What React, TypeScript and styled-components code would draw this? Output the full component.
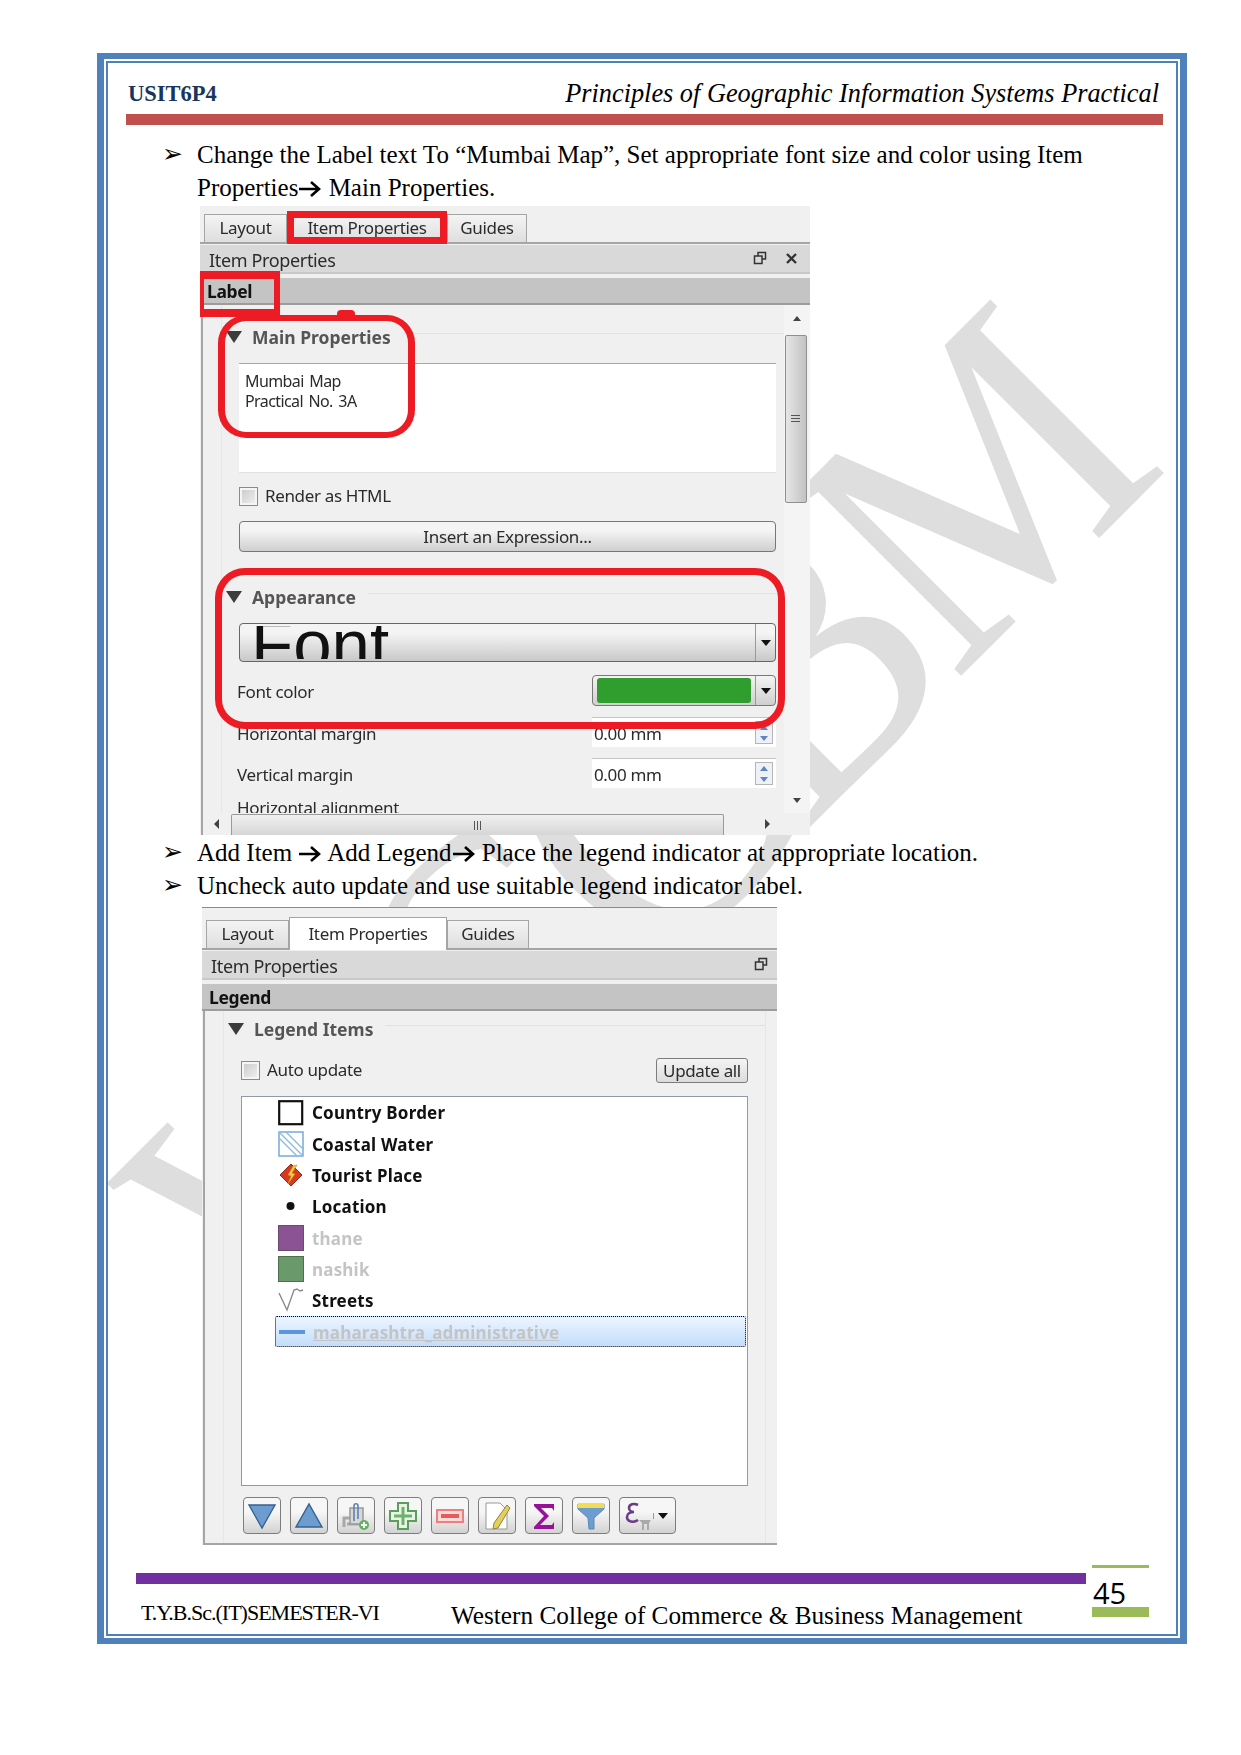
import * as React from 'react';
import styled, {createGlobalStyle} from 'styled-components';

const GlobalStyle = createGlobalStyle`
  html, body {
    margin: 0;
    padding: 0;
    background: #fff;
  }
`;

const Page = styled.div`
  position: relative;
  width: 1241px;
  height: 1755px;
  padding: 53px 0 0 97px;
  box-sizing: border-box;
  overflow: hidden;
  background: #fff;
  font-family: 'Liberation Serif', serif;
  color: #000;
`;

const Watermark = styled.div`
  position: absolute;
  left: 58px;
  top: 1135px;
  transform-origin: 0 0;
  transform: rotate(-45deg) scaleX(0.92);
  font: 375px/1 'Liberation Serif', serif;
  white-space: nowrap;
  color: #dedede;
  letter-spacing: -17px;
`;

const OuterFrame = styled.div`
  position: relative;
  width: 1090px;
  height: 1591px;
  box-sizing: border-box;
  border: solid #4f81bd;
  border-width: 6px 7px;
  padding: 2px;
`;

const InnerFrame = styled.div`
  height: 100%;
  box-sizing: border-box;
  border: 2px solid #4f81bd;
`;

const Header = styled.div`
  display: flex;
  justify-content: space-between;
  align-items: center;
  height: 51px;
  padding: 11px 17px 0 20px;
  box-sizing: border-box;
`;

const Code = styled.div`
  font-size: 22.5px;
  font-weight: 700;
  color: #17365d;
`;

const HeaderTitle = styled.div`
  font-size: 26.3px;
  font-style: italic;
`;

const RedRule = styled.div`
  height: 11px;
  width: 1037px;
  margin-left: 18px;
  background: #c0504d;
`;

const Bullets = styled.div<{$top: number}>`
  margin: ${p => p.$top}px 0 0 54px;
  font-size: 25px;
  line-height: 33px;
`;

const Bullet = styled.div`
  display: flex;
`;

const Mark = styled.span`
  width: 35px;
  flex: none;
  font: 25px/31px 'DejaVu Sans', sans-serif;
`;

const ArrowSvg = styled.svg`
  width: 22px;
  height: 16px;
  vertical-align: -1px;
  margin: 0 1px;
`;

const Arrow = () => (
  <ArrowSvg viewBox="0 0 22 16" fill="none" stroke="#000" strokeWidth="2.6">
    <path d="M0 8h20M12 1l8 7-8 7" />
  </ArrowSvg>
);

const Shot = styled.div<{$left: number; $width: number; $height: number; $top: number}>`
  position: relative;
  margin: ${p => p.$top}px 0 0 ${p => p.$left}px;
  width: ${p => p.$width}px;
  height: ${p => p.$height}px;
  overflow: hidden;
  background: #f0f0f0;
  font: 17px/1.2 'Noto Sans', sans-serif;
  letter-spacing: -0.35px;
  color: #2b2b2b;
  filter: blur(0.45px);
`;

const TabRow = styled.div<{$height: number; $rule?: boolean}>`
  display: flex;
  align-items: flex-end;
  height: ${p => p.$height}px;
  padding-left: 4px;
  border-top: ${p => (p.$rule ? '1px solid #8a8a8a' : 'none')};
  border-bottom: 2px solid #a5a5a5;
`;

const Tab = styled.div<{$width: number; $active?: boolean}>`
  display: flex;
  align-items: center;
  justify-content: center;
  width: ${p => p.$width}px;
  height: ${p => (p.$active ? 33 : 28)}px;
  margin-bottom: ${p => (p.$active ? -2 : 0)}px;
  box-sizing: border-box;
  border: 1px solid #a5a5a5;
  border-bottom: none;
  background: ${p => (p.$active ? '#fff' : 'linear-gradient(#f4f4f4, #dedede)')};
  position: relative;
`;

const DockTitle = styled.div`
  display: flex;
  align-items: center;
  justify-content: space-between;
  height: 29px;
  margin-top: 1px;
  padding: 4px 9px 0;
  box-sizing: border-box;
  background: #d9d9d9;
  border-bottom: 2px solid #c8c8c8;
  font-size: 18px;
`;

const DockIcons = styled.div`
  display: flex;
  gap: 18px;
  align-items: center;
  margin-top: -5px;
`;

const ItemBar = styled.div`
  height: 27px;
  margin-top: 4px;
  padding-left: 7px;
  box-sizing: border-box;
  background: #c4c4c4;
  border-bottom: 2px solid #9c9c9c;
  font-weight: 700;
  font-size: 17.5px;
  color: #111;
  line-height: 27px;
`;

const ScrollBody = styled.div`
  display: flex;
  height: 508px;
`;

const ScrollContent = styled.div`
  width: 583px;
  margin-left: 1px;
  overflow: hidden;
  box-sizing: border-box;
  border-left: 2px solid #a5a5a5;
  padding-left: 18px;
`;

const GroupRail = styled.div`
  height: 100%;
  padding: 17px 0 0 17px;
  box-sizing: border-box;
  border-left: 1px solid #e3e6ea;
`;

const VScroll = styled.div`
  position: relative;
  display: flex;
  flex-direction: column;
  align-items: center;
  width: 26px;
  padding-right: 3px;
  box-sizing: border-box;
  background: #f4f4f4;
`;

const ScrollThumb = styled.div`
  display: flex;
  align-items: center;
  justify-content: center;
  width: 22px;
  height: 168px;
  margin-top: 30px;
  box-sizing: border-box;
  border: 1px solid #8f8f8f;
  border-radius: 2px;
  background: linear-gradient(90deg, #e6e6e6, #c2c2c2);
`;

const Grip = styled.div<{$wide?: boolean}>`
  width: ${p => (p.$wide ? 7 : 9)}px;
  height: ${p => (p.$wide ? 9 : 8)}px;
  background: ${p =>
    p.$wide
      ? 'repeating-linear-gradient(90deg, #555 0 1px, transparent 1px 3px)'
      : 'repeating-linear-gradient(#555 0 1px, transparent 1px 3px)'};
`;

const TriUp = styled.div`
  position: absolute;
  top: 11px;
  left: 9px;
  border: 4px solid transparent;
  border-top: none;
  border-bottom: 5px solid #444;
`;

const TriDown = styled.div`
  position: absolute;
  bottom: 10px;
  left: 9px;
  border: 4px solid transparent;
  border-bottom: none;
  border-top: 5px solid #444;
`;

const HScroll = styled.div`
  display: flex;
  align-items: flex-end;
  height: 22px;
  margin-left: 1px;
  box-sizing: border-box;
  border-left: 2px solid #a5a5a5;
`;

const HArrow = styled.div<{$width: number; $dir: 'l' | 'r'}>`
  display: flex;
  align-items: center;
  justify-content: center;
  width: ${p => p.$width}px;
  height: 100%;
  &::after {
    content: '';
    border: 5px solid transparent;
    border-${p => (p.$dir === 'l' ? 'left' : 'right')}: none;
    border-${p => (p.$dir === 'l' ? 'right' : 'left')}: 5px solid #444;
  }
`;

const HThumb = styled.div`
  display: flex;
  align-items: center;
  justify-content: center;
  width: 494px;
  height: 21px;
  box-sizing: border-box;
  border: 1px solid #9a9a9a;
  border-bottom: none;
  border-radius: 2px 2px 0 0;
  background: linear-gradient(#f0f0f0, #d6d6d6);
`;

const GroupTitle = styled.div<{$height: number; $top?: number}>`
  display: flex;
  align-items: center;
  height: ${p => p.$height}px;
  margin: ${p => p.$top ?? 0}px 0 0 -13px;
  font-weight: 700;
  font-size: 17.5px;
  color: #555;
  letter-spacing: 0;
`;

const Triangle = styled.span`
  width: 0;
  height: 0;
  margin-right: 10px;
  border: 8px solid transparent;
  border-bottom: none;
  border-top: 12px solid #3c3c3c;
`;

const TitleRule = styled.span`
  flex: 1;
  height: 1px;
  margin: -8px 0 0 12px;
  background: #dfe3e8;
`;

const TextBox = styled.div`
  width: 537px;
  height: 110px;
  margin-top: 11px;
  padding: 7px 6px;
  box-sizing: border-box;
  background: #fff;
  border-top: 1px solid #a8a8a8;
  border-bottom: 1px solid #e2e2e2;
  line-height: 20px;
  font-size: 16px;
  letter-spacing: -0.6px;
  word-spacing: 2px;
`;

const CheckRow = styled.div<{$top: number}>`
  display: flex;
  align-items: center;
  gap: 7px;
  margin-top: ${p => p.$top}px;
`;

const CheckBox = styled.span`
  width: 19px;
  height: 19px;
  box-sizing: border-box;
  border: 1px solid #8a8a8a;
  outline: 2px solid #f5f5f5;
  outline-offset: -3px;
  background: linear-gradient(135deg, #c8c8c8, #f2f2f2);
`;

const WideButton = styled.div`
  width: 537px;
  height: 31px;
  margin-top: 15px;
  box-sizing: border-box;
  border: 1px solid #777;
  border-radius: 4px;
  background: linear-gradient(#f4f4f4 30%, #cfcfcf);
  text-align: center;
  line-height: 29px;
`;

const FontButton = styled.div`
  display: flex;
  width: 537px;
  height: 39px;
  margin-top: 11px;
  box-sizing: border-box;
  border: 1px solid #666;
  border-radius: 4px;
  background: linear-gradient(#f4f4f4 25%, #c8c8c8);
`;

const FontPreview = styled.div`
  flex: 1;
  overflow: hidden;
  margin: 2px 0 3px;
  padding-left: 11px;
  font: 69px/37px 'Liberation Sans', sans-serif;
  letter-spacing: 0;
  color: #111;
  height: 33px;
`;

const DropCell = styled.div`
  display: flex;
  align-items: center;
  justify-content: center;
  width: 19px;
  border-left: 1px solid #999;
  &::after {
    content: '';
    border: 5px solid transparent;
    border-bottom: none;
    border-top: 6px solid #111;
  }
`;

const FieldRow = styled.div<{$top: number; $height: number}>`
  display: flex;
  align-items: center;
  justify-content: space-between;
  width: 539px;
  height: ${p => p.$height}px;
  margin: ${p => p.$top}px 0 0 -2px;
`;

const FieldText = styled.span`
  margin-top: 3px;
`;

const ColorButton = styled.div`
  display: flex;
  width: 184px;
  height: 31px;
  padding-left: 4px;
  box-sizing: border-box;
  border: 1px solid #777;
  border-radius: 4px;
  background: linear-gradient(#f4f4f4, #cfcfcf);
`;

const Swatch = styled.div`
  width: 155px;
  margin: 2px 4px 2px 0;
  border-radius: 3px;
  background: #2f9e2f;
`;

const SpinInput = styled.div`
  display: flex;
  align-items: center;
  justify-content: space-between;
  width: 184px;
  height: 100%;
  padding: 0 3px 0 2px;
  box-sizing: border-box;
  background: #fff;
  border-top: 1px solid #c4c4c4;
`;

const Spin = styled.div`
  display: flex;
  flex-direction: column;
  width: 18px;
  height: 23px;
  box-sizing: border-box;
  border: 1px solid #b5b5b5;
  background: #eef1f6;
  & > span {
    flex: 1;
    display: flex;
    align-items: center;
    justify-content: center;
  }
`;

const SpinArrow = styled.i<{$up?: boolean}>`
  border: 4px solid transparent;
  border-${p => (p.$up ? 'top' : 'bottom')}: none;
  border-${p => (p.$up ? 'bottom' : 'top')}: 5px solid #5f86c0;
`;

const Clipped = styled.div`
  margin: 10px 0 0 -2px;
`;

const RedBox = styled.div<{$x: number; $y: number; $w: number; $h: number; $border: string; $radius?: number}>`
  position: absolute;
  left: ${p => p.$x}px;
  top: ${p => p.$y}px;
  width: ${p => p.$w}px;
  height: ${p => p.$h}px;
  box-sizing: border-box;
  border: solid #ed1c24;
  border-width: ${p => p.$border};
  border-radius: ${p => p.$radius ?? 0}px;
`;

const Nub = styled.div`
  position: absolute;
  left: 137px;
  top: 104px;
  width: 18px;
  height: 6px;
  border-radius: 4px 4px 0 0;
  background: #ed1c24;
`;

const LegendBody = styled.div`
  height: 534px;
  margin-left: 1px;
  box-sizing: border-box;
  border-left: 2px solid #a5a5a5;
  border-bottom: 2px solid #a5a5a5;
`;

const LegendGroup = styled.div`
  width: 543px;
  height: 532px;
  margin-left: 18px;
  padding: 8px 0 0 17px;
  box-sizing: border-box;
  border-left: 1px solid #e3e6ea;
  border-right: 1px solid #e3e6ea;
`;

const AutoRow = styled.div`
  display: flex;
  align-items: center;
  justify-content: space-between;
  width: 507px;
  height: 25px;
  margin-top: 19px;
`;

const SmallButton = styled.div`
  width: 92px;
  height: 25px;
  box-sizing: border-box;
  border: 1px solid #7c7c7c;
  border-radius: 3px;
  background: linear-gradient(#f4f4f4, #dcdcdc);
  text-align: center;
  line-height: 23px;
`;

const ListBox = styled.div`
  width: 507px;
  height: 390px;
  margin-top: 13px;
  box-sizing: border-box;
  border: 1px solid #929aa3;
  background: #fff;
`;

const LegendRow = styled.div<{$selected?: boolean; $muted?: boolean}>`
  display: flex;
  align-items: center;
  gap: 8px;
  height: 31.3px;
  margin-left: ${p => (p.$selected ? 32.5 : 36)}px;
  margin-right: 1px;
  padding: 2px 0 0 ${p => (p.$selected ? 3.5 : 0)}px;
  box-sizing: border-box;
  border: ${p => (p.$selected ? '1px dotted #000' : 'none')};
  border-radius: 2px;
  background: ${p => (p.$selected ? 'linear-gradient(#edf5ff, #c3ddfb)' : 'none')};
  font-weight: 700;
  letter-spacing: 0.2px;
  color: ${p => (p.$muted ? '#c4c4c4' : '#111')};
  text-decoration: ${p => (p.$selected ? 'underline' : 'none')};
`;

const SymbolBox = styled.span`
  display: flex;
  width: 26px;
  height: 26px;
  flex: none;
  margin-top: -2px;
`;

const Toolbar = styled.div`
  display: flex;
  gap: 9px;
  margin: 11px 0 0 2px;
`;

const ToolButton = styled.div<{$wide?: boolean}>`
  display: flex;
  align-items: center;
  justify-content: center;
  width: ${p => (p.$wide ? 57 : 38)}px;
  height: 37px;
  box-sizing: border-box;
  border: 1px solid #7d7d7d;
  border-radius: 4px;
  background: linear-gradient(#f6f6f6 40%, #d2d2d2);
`;

const Footer = styled.div`
  display: flex;
  margin: 20px 0 0 28px;
  height: 54px;
`;

const FooterMain = styled.div`
  width: 950px;
  padding-top: 8px;
`;

const PurpleRule = styled.div`
  height: 11px;
  background: #7030a0;
`;

const FooterText = styled.div`
  display: flex;
  align-items: flex-start;
  padding: 15px 0 0 5px;
`;

const Semester = styled.span`
  width: 310px;
  margin-top: 1px;
  font-size: 22px;
  letter-spacing: -1px;
`;

const College = styled.span`
  font-size: 25.25px;
  margin-top: 2px;
`;

const PageNumber = styled.div`
  width: 57px;
  margin-left: 6px;
`;

const NumberText = styled.div`
  height: 39px;
  border-top: 3px solid #9bbb59;
  font: 29px/50px 'Open Sans', sans-serif;
  padding-left: 1px;
  border-bottom: 10px solid #9bbb59;
`;

const RestoreIcon = () => (
  <svg width="14" height="14" viewBox="0 0 14 14" fill="none" stroke="#333" strokeWidth="1.5">
    <rect x="5" y="1.5" width="7.5" height="6.5" />
    <rect x="1.5" y="5" width="7.5" height="7.5" fill="#d9d9d9" />
  </svg>
);

const CloseIcon = () => (
  <svg width="16" height="13" viewBox="0 0 16 13" stroke="#333" strokeWidth="2.4">
    <path d="M2 2l9 9M11 2l-9 9" />
  </svg>
);

const Symbol = ({kind}: {kind: string}) => (
  <SymbolBox>
    <svg width="26" height="26" viewBox="0 0 26 26">
      {kind === 'border' && <rect x="1.2" y="1.2" width="23" height="23" fill="#fff" stroke="#111" strokeWidth="2.2" />}
      {kind === 'water' && (
        <g>
          <rect x="1" y="1" width="24" height="24" fill="#fff" stroke="#6ba4d4" strokeWidth="1.4" />
          <path d="M1 7l18 18M1 1l24 24M8 1l17 17" stroke="#8dbbe0" strokeWidth="1.4" fill="none" />
        </g>
      )}
      {kind === 'tourist' && (
        <g>
          <path d="M13 2l11 11-11 11L2 13z" fill="#d93a1e" stroke="#8c2a18" />
          <path d="M19 3l-5 8 3 1-7 10 3-8-3-1 5-9z" fill="#f6c945" stroke="#b98a20" strokeWidth=".6" />
        </g>
      )}
      {kind === 'dot' && <circle cx="12.5" cy="12" r="4" fill="#111" />}
      {kind === 'purple' && <rect x=".5" y=".5" width="25" height="25" fill="#8b5294" stroke="#6a4a70" />}
      {kind === 'green' && <rect x=".5" y=".5" width="25" height="25" fill="#6a9a6c" stroke="#4d6f4e" />}
      {kind === 'street' && (
        <path d="M1 6l8 17 7-20 3-1 3 2 3-1" fill="none" stroke="#8a8a8a" strokeWidth="1.4" />
      )}
      {kind === 'line' && <rect x="0" y="11" width="26" height="4" fill="#5b97db" />}
    </svg>
  </SymbolBox>
);

const ToolIcon = ({kind}: {kind: string}) => (
  <svg width="30" height="30" viewBox="0 0 30 30">
    {kind === 'down' && <path d="M2 4h26L15 27z" fill="#6d9dd0" stroke="#35618f" strokeWidth="1.4" />}
    {kind === 'up' && <path d="M2 26h26L15 3z" fill="#6d9dd0" stroke="#35618f" strokeWidth="1.4" />}
    {kind === 'copy' && (
      <g fill="none">
        <path d="M3 26v-9h6M6 23h15" stroke="#a8a8a8" strokeWidth="3" />
        <rect x="9" y="7" width="13" height="16" fill="#d8d8d8" stroke="#999" strokeWidth="1.5" />
        <path d="M13 20V5c0-3 4-3 4 0v13" stroke="#5c83b4" strokeWidth="1.6" />
        <circle cx="23" cy="24" r="5" fill="#62b25e" />
        <path d="M23 21v6M20 24h6" stroke="#fff" strokeWidth="2" />
      </g>
    )}
    {kind === 'plus' && (
      <g>
        <path d="M10 2h10v8h8v10h-8v8H10v-8H2V10h8z" fill="#e8f4e4" stroke="#5c9c5c" strokeWidth="2" />
        <path d="M15 6v18M6 15h18" stroke="#6fb06f" strokeWidth="3" />
      </g>
    )}
    {kind === 'minus' && (
      <g>
        <rect x="2" y="9" width="26" height="12" fill="#fbdcdc" stroke="#ef7f7f" strokeWidth="2" />
        <rect x="6" y="13" width="18" height="4" fill="#e85b5b" />
      </g>
    )}
    {kind === 'edit' && (
      <g>
        <path d="M4 2h14l7 7v19H4z" fill="#fff" stroke="#999" strokeWidth="1" />
        <path d="M25 4l3 3-12 20-5 1 1-6z" fill="#e4cf5c" stroke="#8f8540" strokeWidth="1" />
      </g>
    )}
    {kind === 'sum' && <path d="M5 3h20v7l-2-3H12l8 8-9 9h12l2-3v7H5v-2l10-11L5 5z" fill="#98109a" />}
    {kind === 'filter' && (
      <g>
        <path d="M2 3h26v5L18 17v11h-5l-1-11L2 8z" fill="#6d9dd0" stroke="#5d88b4" strokeWidth="1" />
        <rect x="2" y="2" width="26" height="5" fill="#f0dc55" />
      </g>
    )}
  </svg>
);

const ExpressionIcon = () => (
  <svg width="30" height="30" viewBox="0 0 30 30">
    <path d="M15 4c-4-2-9-1-9 3 0 3 3 4 5 4-4 0-7 2-7 5 0 5 7 6 11 3" fill="none" stroke="#6a3d86" strokeWidth="2.6" />
    <path d="M16 19h12l-2 3v7h-2v-6h-3v6h-2v-7z" fill="#a9a9a9" />
  </svg>
);

const App = () => (
  <Page>
    <GlobalStyle />
    <Watermark>WCCBM</Watermark>
    <OuterFrame>
      <InnerFrame>
        <Header>
          <Code>USIT6P4</Code>
          <HeaderTitle>Principles of Geographic Information Systems Practical</HeaderTitle>
        </Header>
        <RedRule />
        <Bullets $top={13}>
          <Bullet>
            <Mark>➢</Mark>
            <span>
              Change the Label text To “Mumbai Map”, Set appropriate font size and color using Item
              <br />
              Properties<Arrow /> Main Properties.
            </span>
          </Bullet>
        </Bullets>
        <Shot $left={92} $width={610} $height={629} $top={2}>
          <TabRow $height={36}>
            <Tab $width={83}>Layout</Tab>
            <Tab $width={160}>Item Properties</Tab>
            <Tab $width={80}>Guides</Tab>
          </TabRow>
          <DockTitle>
            Item Properties
            <DockIcons>
              <RestoreIcon />
              <CloseIcon />
            </DockIcons>
          </DockTitle>
          <ItemBar>Label</ItemBar>
          <ScrollBody>
            <ScrollContent>
              <GroupRail>
                <GroupTitle $height={30}>
                  <Triangle />
                  Main Properties
                  <TitleRule />
                </GroupTitle>
                <TextBox>
                  Mumbai Map
                  <br />
                  Practical No. 3A
                </TextBox>
                <CheckRow $top={13}>
                  <CheckBox />
                  Render as HTML
                </CheckRow>
                <WideButton>Insert an Expression...</WideButton>
                <GroupTitle $height={30} $top={30}>
                  <Triangle />
                  Appearance
                  <TitleRule />
                </GroupTitle>
                <FontButton>
                  <FontPreview>Font</FontPreview>
                  <DropCell />
                </FontButton>
                <FieldRow $top={13} $height={31}>
                  <FieldText>Font color</FieldText>
                  <ColorButton>
                    <Swatch />
                    <DropCell />
                  </ColorButton>
                </FieldRow>
                <FieldRow $top={11} $height={30}>
                  <FieldText>Horizontal margin</FieldText>
                  <SpinInput>
                    <FieldText>0.00 mm</FieldText>
                    <Spin>
                      <span><SpinArrow $up /></span>
                      <span><SpinArrow /></span>
                    </Spin>
                  </SpinInput>
                </FieldRow>
                <FieldRow $top={11} $height={30}>
                  <FieldText>Vertical margin</FieldText>
                  <SpinInput>
                    <FieldText>0.00 mm</FieldText>
                    <Spin>
                      <span><SpinArrow $up /></span>
                      <span><SpinArrow /></span>
                    </Spin>
                  </SpinInput>
                </FieldRow>
                <Clipped>Horizontal alignment</Clipped>
              </GroupRail>
            </ScrollContent>
            <VScroll>
              <TriUp />
              <ScrollThumb>
                <Grip />
              </ScrollThumb>
              <TriDown />
            </VScroll>
          </ScrollBody>
          <HScroll>
            <HArrow $width={28} $dir="l" />
            <HThumb>
              <Grip $wide />
            </HThumb>
            <HArrow $width={86} $dir="r" />
          </HScroll>
          <RedBox $x={87} $y={5} $w={160} $h={33} $border="7px" />
          <RedBox $x={0} $y={65} $w={80} $h={46} $border="8px 6px 8px 4px" />
          <RedBox $x={18} $y={109} $w={197} $h={123} $border="6px 7px" $radius={28} />
          <Nub />
          <RedBox $x={15} $y={362} $w={570} $h={161} $border="7px" $radius={30} />
        </Shot>
        <Bullets $top={1}>
          <Bullet>
            <Mark>➢</Mark>
            <span>
              Add Item <Arrow /> Add Legend<Arrow /> Place the legend indicator at appropriate location.
            </span>
          </Bullet>
          <Bullet>
            <Mark>➢</Mark>
            <span>Uncheck auto update and use suitable legend indicator label.</span>
          </Bullet>
        </Bullets>
        <Shot $left={94} $width={575} $height={638} $top={5}>
          <TabRow $height={40} $rule>
            <Tab $width={83}>Layout</Tab>
            <Tab $width={158} $active>Item Properties</Tab>
            <Tab $width={82}>Guides</Tab>
          </TabRow>
          <DockTitle>
            Item Properties
            <DockIcons>
              <RestoreIcon />
            </DockIcons>
          </DockTitle>
          <ItemBar>Legend</ItemBar>
          <LegendBody>
            <LegendGroup>
              <GroupTitle $height={20}>
                <Triangle />
                Legend Items
                <TitleRule />
              </GroupTitle>
              <AutoRow>
                <CheckRow $top={0}>
                  <CheckBox />
                  Auto update
                </CheckRow>
                <SmallButton>Update all</SmallButton>
              </AutoRow>
              <ListBox>
                <LegendRow><Symbol kind="border" />Country Border</LegendRow>
                <LegendRow><Symbol kind="water" />Coastal Water</LegendRow>
                <LegendRow><Symbol kind="tourist" />Tourist Place</LegendRow>
                <LegendRow><Symbol kind="dot" />Location</LegendRow>
                <LegendRow $muted><Symbol kind="purple" />thane</LegendRow>
                <LegendRow $muted><Symbol kind="green" />nashik</LegendRow>
                <LegendRow><Symbol kind="street" />Streets</LegendRow>
                <LegendRow $muted $selected><Symbol kind="line" />maharashtra_administrative</LegendRow>
              </ListBox>
              <Toolbar>
                {['down', 'up', 'copy', 'plus', 'minus', 'edit', 'sum', 'filter'].map(kind => (
                  <ToolButton key={kind}>
                    <ToolIcon kind={kind} />
                  </ToolButton>
                ))}
                <ToolButton $wide>
                  <ExpressionIcon />
                  <DropCell />
                </ToolButton>
              </Toolbar>
            </LegendGroup>
          </LegendBody>
        </Shot>
        <Footer>
          <FooterMain>
            <PurpleRule />
            <FooterText>
              <Semester>T.Y.B.Sc.(IT)SEMESTER-VI</Semester>
              <College>Western College of Commerce &amp; Business Management</College>
            </FooterText>
          </FooterMain>
          <PageNumber>
            <NumberText>45</NumberText>
          </PageNumber>
        </Footer>
      </InnerFrame>
    </OuterFrame>
  </Page>
);

export default App;
